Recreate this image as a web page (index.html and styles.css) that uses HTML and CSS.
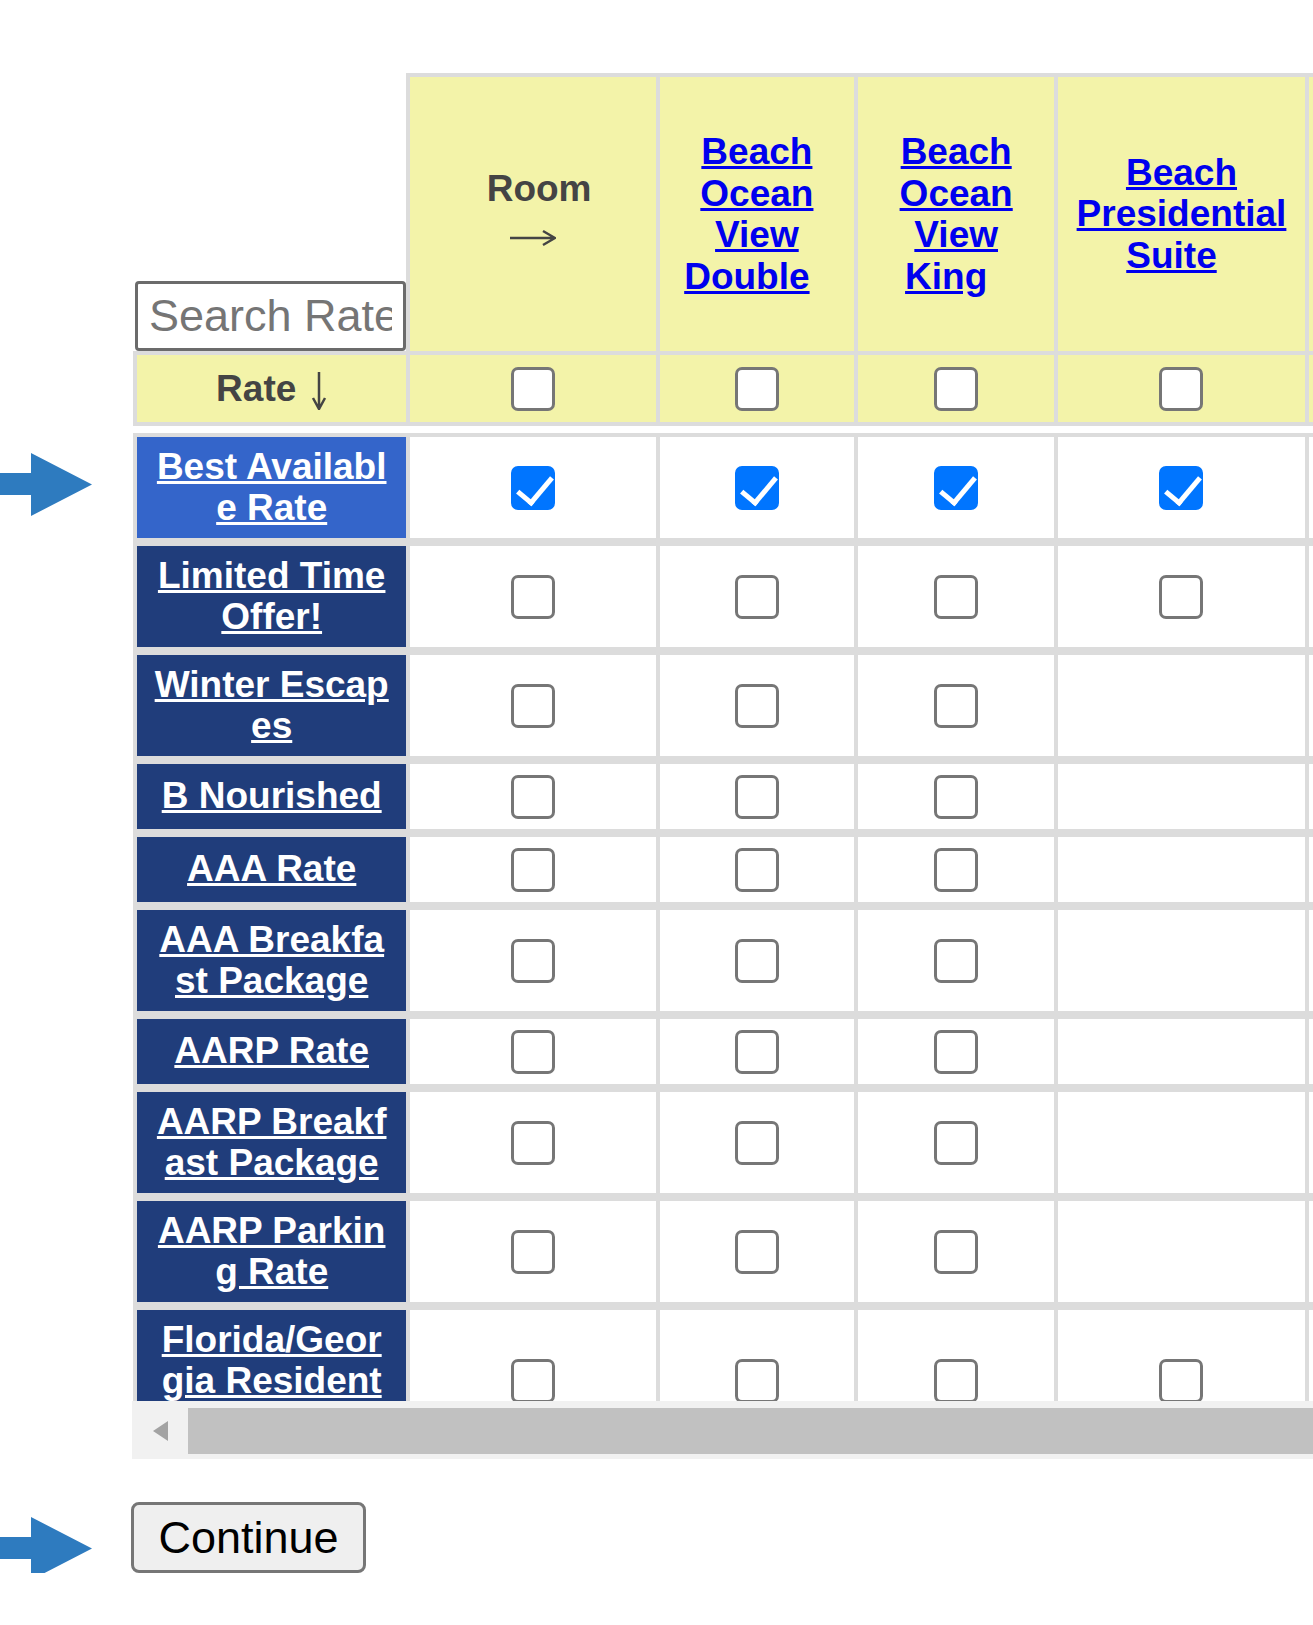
FILE: index.html
```html
<!DOCTYPE html>
<html lang="en">
<head>
    <meta charset="UTF-8">
    <meta name="viewport" content="width=device-width, initial-scale=1.0">
    <title>Select Rate and Room</title>
    <link rel="stylesheet" href="styles.css">
</head>
<body>
    <!-- Callout arrows pointing at the selected rate and the button -->
    <svg class="pointer pointer-rate" width="92" height="63" viewBox="0 0 92 63"><polygon points="0,20 31,20 31,0 92,31.5 31,63 31,42 0,42"/></svg>
    <svg class="pointer pointer-continue" width="92" height="63" viewBox="0 0 92 63"><polygon points="0,20 31,20 31,0 92,31.5 31,63 31,42 0,42"/></svg>

    <div class="grid-frame">
        <div class="grid-scroll">
            <table class="rate-grid">
                <colgroup>
                    <col class="col-rate">
                    <col class="col-room-label">
                    <col class="col-narrow">
                    <col class="col-mid">
                    <col class="col-wide">
                    <col class="col-narrow">
                </colgroup>
                <thead>
                    <tr class="room-row">
                        <th class="corner"><input type="text" class="rate-search" placeholder="Search Rate"></th>
                        <th>
                            <span class="room-word">Room</span>
                            <svg class="arrow-right" width="46" height="18" viewBox="0 0 46 18"><path d="M0 9H44M33 2L45 9L33 16"/></svg>
                        </th>
                        <th><a href="#">Beach Ocean View Double</a><span class="link-gap"></span></th>
                        <th><a href="#">Beach Ocean View King</a><span class="link-gap"></span></th>
                        <th><a href="#">Beach Presidential Suite</a><span class="link-gap"></span></th>
                        <th><a href="#">Beach Ocean Front King</a><span class="link-gap"></span></th>
                    </tr>
                    <tr class="select-row">
                        <th class="rate-label">Rate<svg class="arrow-down" width="16" height="38" viewBox="0 0 16 38"><path d="M8 0V36M2 26L8 37L14 26"/></svg></th>
                        <td><input type="checkbox" class="pick"></td>
                        <td><input type="checkbox" class="pick"></td>
                        <td><input type="checkbox" class="pick"></td>
                        <td><input type="checkbox" class="pick"></td>
                        <td><input type="checkbox" class="pick"></td>
                    </tr>
                    <tr class="gap-row"><td colspan="6"></td></tr>
                </thead>
                <tbody>
                    <tr>
                        <th class="rate-name is-selected"><a href="#">Best Available Rate</a></th>
                        <td><input type="checkbox" class="pick" checked></td>
                        <td><input type="checkbox" class="pick" checked></td>
                        <td><input type="checkbox" class="pick" checked></td>
                        <td><input type="checkbox" class="pick" checked></td>
                        <td><input type="checkbox" class="pick" checked></td>
                    </tr>
                    <tr>
                        <th class="rate-name"><a href="#">Limited Time Offer!</a></th>
                        <td><input type="checkbox" class="pick"></td>
                        <td><input type="checkbox" class="pick"></td>
                        <td><input type="checkbox" class="pick"></td>
                        <td><input type="checkbox" class="pick"></td>
                        <td><input type="checkbox" class="pick"></td>
                    </tr>
                    <tr>
                        <th class="rate-name"><a href="#">Winter Escapes</a></th>
                        <td><input type="checkbox" class="pick"></td>
                        <td><input type="checkbox" class="pick"></td>
                        <td><input type="checkbox" class="pick"></td>
                        <td></td>
                        <td></td>
                    </tr>
                    <tr>
                        <th class="rate-name"><a href="#">B Nourished</a></th>
                        <td><input type="checkbox" class="pick"></td>
                        <td><input type="checkbox" class="pick"></td>
                        <td><input type="checkbox" class="pick"></td>
                        <td></td>
                        <td></td>
                    </tr>
                    <tr>
                        <th class="rate-name"><a href="#">AAA Rate</a></th>
                        <td><input type="checkbox" class="pick"></td>
                        <td><input type="checkbox" class="pick"></td>
                        <td><input type="checkbox" class="pick"></td>
                        <td></td>
                        <td></td>
                    </tr>
                    <tr>
                        <th class="rate-name"><a href="#">AAA Breakfast Package</a></th>
                        <td><input type="checkbox" class="pick"></td>
                        <td><input type="checkbox" class="pick"></td>
                        <td><input type="checkbox" class="pick"></td>
                        <td></td>
                        <td></td>
                    </tr>
                    <tr>
                        <th class="rate-name"><a href="#">AARP Rate</a></th>
                        <td><input type="checkbox" class="pick"></td>
                        <td><input type="checkbox" class="pick"></td>
                        <td><input type="checkbox" class="pick"></td>
                        <td></td>
                        <td></td>
                    </tr>
                    <tr>
                        <th class="rate-name"><a href="#">AARP Breakfast Package</a></th>
                        <td><input type="checkbox" class="pick"></td>
                        <td><input type="checkbox" class="pick"></td>
                        <td><input type="checkbox" class="pick"></td>
                        <td></td>
                        <td></td>
                    </tr>
                    <tr>
                        <th class="rate-name"><a href="#">AARP Parking Rate</a></th>
                        <td><input type="checkbox" class="pick"></td>
                        <td><input type="checkbox" class="pick"></td>
                        <td><input type="checkbox" class="pick"></td>
                        <td></td>
                        <td></td>
                    </tr>
                    <tr>
                        <th class="rate-name"><a href="#">Florida/Georgia Resident Rate</a></th>
                        <td><input type="checkbox" class="pick"></td>
                        <td><input type="checkbox" class="pick"></td>
                        <td><input type="checkbox" class="pick"></td>
                        <td><input type="checkbox" class="pick"></td>
                        <td><input type="checkbox" class="pick"></td>
                    </tr>
                </tbody>
            </table>
        </div>

        <!-- Horizontal scrollbar of the grid -->
        <div class="grid-scrollbar">
            <span class="scroll-btn"></span>
            <span class="scroll-thumb"></span>
        </div>
    </div>

    <div class="actions">
        <button class="continue-btn">Continue</button>
    </div>
</body>
</html>
```

FILE: styles.css
```css
/* Reset default margins and paddings */
* {
    margin: 0;
    padding: 0;
    box-sizing: border-box;
}

body {
    position: relative;
    font-family: "Liberation Sans", Arial, sans-serif;
    background: #fff;
    color: #444;
}

/* Blue callout arrows */
.pointer {
    position: absolute;
    left: 0;
    fill: #2e7bbf;
}

.pointer-rate {
    top: 453px;
}

.pointer-continue {
    top: 1517px;
}

.grid-frame {
    margin: 73px 0 0 132px;
}

.grid-scroll {
    height: 1328px;
    overflow: hidden;
    padding-left: 1px;
}

.rate-grid {
    width: 1374px;
    table-layout: fixed;
    border-collapse: separate;
    border-spacing: 0;
    font-size: 37px;
    font-weight: 700;
    line-height: 41.5px;
    text-align: center;
}

.col-rate { width: 277px; }
.col-room-label { width: 249px; }
.col-narrow { width: 198px; }
.col-mid { width: 200px; }
.col-wide { width: 250px; }

.rate-grid a {
    color: #0000ee;
    text-decoration: underline;
}

/* Room header row */
.room-row th {
    height: 282px;
    padding: 0 14px;
    background: #f3f3a9;
    border-top: 4px solid #dcdcdc;
    border-right: 4px solid #dcdcdc;
    border-bottom: 4px solid #dcdcdc;
    vertical-align: middle;
}

.room-row .corner {
    padding: 0 0 0 2px;
    background: none;
    border-top: 0;
    vertical-align: bottom;
}

.room-word {
    display: block;
    padding-left: 12px;
}

.arrow-right {
    display: block;
    margin: 20px auto 13px;
    fill: none;
    stroke: #444;
    stroke-width: 2.5;
}

.link-gap {
    display: inline-block;
    width: 20px;
}

.rate-search {
    display: block;
    width: 271px;
    height: 70px;
    padding: 0 11px;
    font-family: "Liberation Sans", Arial, sans-serif;
    font-size: 45px;
    color: #333;
    background: #fff;
    border: 3px solid #6b6b6b;
    border-radius: 4px;
}

.rate-search::placeholder {
    color: #757575;
}

/* Row with the column select boxes */
.select-row th,
.select-row td {
    height: 71px;
    padding: 0 10px;
    background: #f3f3a9;
    border-right: 4px solid #dcdcdc;
    border-bottom: 4px solid #dcdcdc;
    vertical-align: middle;
}

.select-row .rate-label {
    border-left: 4px solid #dcdcdc;
}

.arrow-down {
    margin-left: 15px;
    vertical-align: -9px;
    fill: none;
    stroke: #444;
    stroke-width: 2.5;
}

.gap-row td {
    height: 7px;
    padding: 0;
}

/* Rate rows */
.rate-grid tbody th,
.rate-grid tbody td {
    padding: 10.5px 10px;
    background: #fff;
    border-right: 4px solid #dcdcdc;
    border-bottom: 8px solid #dcdcdc;
    vertical-align: middle;
}

.rate-grid tbody tr:first-child th,
.rate-grid tbody tr:first-child td {
    border-top: 4px solid #dcdcdc;
}

.rate-grid tbody .rate-name {
    padding: 10px 15px;
    line-height: 40.5px;
    background: #203d7b;
    border-left: 4px solid #dcdcdc;
    word-break: break-all;
}

.rate-grid tbody .rate-name.is-selected {
    background: #3465ca;
}

.rate-name a {
    color: #fff;
}

/* Checkboxes */
.pick {
    appearance: none;
    -webkit-appearance: none;
    position: relative;
    display: block;
    width: 44px;
    height: 44px;
    margin: 0 auto;
    background: #fff;
    border: 3px solid #767676;
    border-radius: 7px;
}

.pick:checked {
    background: #0075ff;
    border-color: #0075ff;
}

.pick:checked::after {
    content: "";
    position: absolute;
    left: 11px;
    top: 0;
    width: 15px;
    height: 30px;
    border: solid #fff;
    border-width: 0 5px 5px 0;
    transform: rotate(40deg);
}

/* Horizontal scrollbar */
.grid-scrollbar {
    display: flex;
    height: 58px;
    padding: 7px 0 5px;
    background: #f1f1f1;
}

.scroll-btn {
    display: flex;
    align-items: center;
    justify-content: center;
    width: 56px;
}

.scroll-btn::before {
    content: "";
    border-right: 15px solid #a3a3a3;
    border-top: 10px solid transparent;
    border-bottom: 10px solid transparent;
}

.scroll-thumb {
    flex: 1;
    background: #c1c1c1;
}

.actions {
    margin: 43px 0 0 131px;
}

.continue-btn {
    width: 235px;
    height: 71px;
    font-family: "Liberation Sans", Arial, sans-serif;
    font-size: 45px;
    color: #000;
    background: #efefef;
    border: 3px solid #767676;
    border-radius: 8px;
}
```
